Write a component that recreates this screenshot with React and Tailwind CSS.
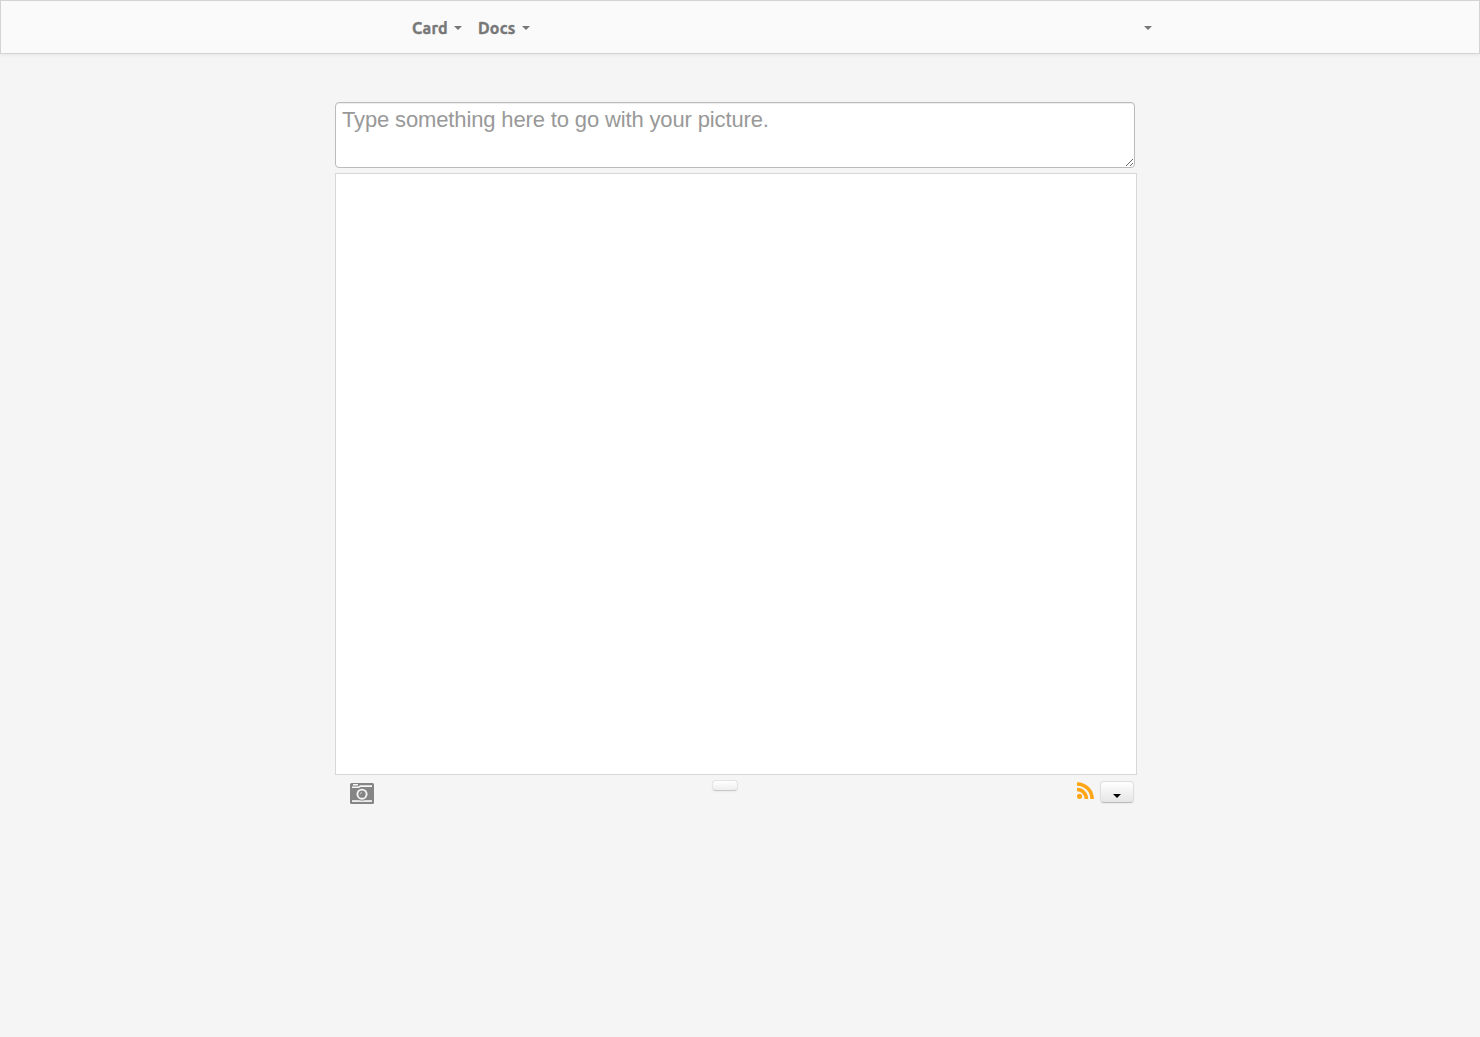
const Caret = ({ className = "" }) => (
  <span
    className={`block h-0 w-0 border-x-4 border-t-4 border-x-transparent ${className}`}
  />
);

const MenuItem = ({ label, width }) => (
  <button className="flex items-center font-['Ubuntu','Noto_Sans',sans-serif] text-[16px] leading-5 font-bold text-[#777]">
    <span className={`${width} whitespace-nowrap text-left tracking-[0.2px] [-webkit-text-stroke:0.4px_#777]`}>{label}</span>
    <Caret className="border-t-[#777]" />
  </button>
);

const CameraIcon = () => (
  <svg width="24" height="21" viewBox="0 0 24 21" fill="none">
    <rect width="24" height="21" rx="1.5" fill="#858585" />
    <path d="M3 1h5v1.5H3zM10 2.3h12v1.8H10.5L9 5H2V3.6h6.5z" fill="#f5f5f5" />
    <path d="M2 17.2h20v1.7H2z" fill="#f5f5f5" />
    <circle cx="12" cy="11.2" r="6.3" fill="#858585" />
    <circle cx="12" cy="11.2" r="4.6" stroke="#f5f5f5" strokeWidth="1.9" />
    <path d="M10.2 11.3a1.8 1.8 0 0 1 1.8-1.8" stroke="#d5d5d5" strokeWidth="0.8" />
  </svg>
);

const FeedIcon = () => (
  <svg width="17" height="17" viewBox="0 0 17 17" fill="none" stroke="#ffa516">
    <circle cx="2.5" cy="14.3" r="2.6" fill="#ffa516" stroke="none" />
    <path d="M0 7.5a9.4 9.4 0 0 1 9.4 9.4" strokeWidth="3.5" />
    <path d="M0 1.9a15 15 0 0 1 15.1 15" strokeWidth="3.5" />
  </svg>
);

export default function App() {
  return (
    <div className="h-[1037px] overflow-hidden bg-[#f5f5f5] font-['Liberation_Sans',sans-serif]">
      <nav className="flex h-[54px] items-center justify-between border border-[#d4d4d4] bg-[#fafafa] pr-[327px] pb-px pl-[411px] shadow-[0_1px_4px_rgba(0,0,0,0.065)]">
        <div className="flex gap-4 pt-0.5">
          <MenuItem label="Card" width="w-[42px]" />
          <MenuItem label="Docs" width="w-[44px]" />
        </div>
        <button aria-label="Account" className="pt-0.5">
          <Caret className="border-t-[#777]" />
        </button>
      </nav>
      <main className="ml-[335px] w-[802px] pt-12">
        <textarea
          placeholder="Type something here to go with your picture."
          className="block h-[66px] w-[800px] resize rounded-[4px] border border-[#bbb] bg-white px-1.5 py-1 text-[22px] tracking-[-0.14px] leading-[26px] text-[#555] shadow-[inset_0_1px_1px_rgba(0,0,0,0.075)] outline-none placeholder:text-[#999]"
        />
        <div className="mt-[5px] h-[602px] border border-[#d7d7d7] bg-white" />
        <div className="flex items-start justify-between pr-[3px] pl-[15px]">
          <div className="w-[362px] pt-2">
            <CameraIcon />
          </div>
          <button aria-label="Options" className="mt-[5px] h-[11px] w-[26px] rounded-[4px] border border-[#e3e3e3] border-b-[#c8c8c8] bg-gradient-to-b from-white to-[#eee] shadow-[0_1px_2px_rgba(0,0,0,0.05)]" />
          <div className="flex w-[396px] items-start justify-end">
            <div className="mt-[7px] mr-1.5">
              <FeedIcon />
            </div>
            <button aria-label="More" className="mt-1.5 flex h-[22px] w-[34px] justify-center rounded-[4px] border border-[#dedede] border-b-[#bbb] bg-gradient-to-b from-white to-[#e6e6e6] pt-3 shadow-[0_1px_2px_rgba(0,0,0,0.05)]">
              <Caret className="border-t-black" />
            </button>
          </div>
        </div>
      </main>
    </div>
  );
}
